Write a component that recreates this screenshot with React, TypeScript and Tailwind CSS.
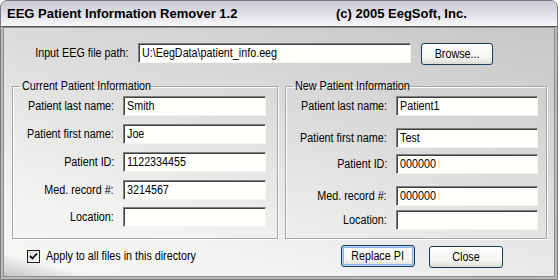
import type { ReactNode } from "react";

const uiFont = "font-['Liberation_Sans',sans-serif]";

type Field = {
  label: string;
  value: string;
  gap: string;
};

const currentFields: Field[] = [
  { label: "Patient last name:", value: "Smith", gap: "mt-[3px]" },
  { label: "Patient first name:", value: "Joe", gap: "mt-[8px]" },
  { label: "Patient ID:", value: "1122334455", gap: "mt-[8px]" },
  { label: "Med. record #:", value: "3214567", gap: "mt-[8px]" },
  { label: "Location:", value: "", gap: "mt-[7px]" },
];

const newFields: Field[] = [
  { label: "Patient last name:", value: "Patient1", gap: "mt-[3px]" },
  { label: "Patient first name:", value: "Test", gap: "mt-[12px]" },
  { label: "Patient ID:", value: "000000", gap: "mt-[6px]" },
  { label: "Med. record #:", value: "000000", gap: "mt-[12px]" },
  { label: "Location:", value: "", gap: "mt-[4px]" },
];

// the dialog font is narrower than Arial, so text is squeezed horizontally
function Narrow({ children, align = "left" }: { children: ReactNode; align?: "left" | "right" | "center" }) {
  const origin = align === "right" ? "origin-right" : align === "center" ? "origin-center" : "origin-left";
  return <span className={`inline-block whitespace-nowrap scale-x-[0.86] ${origin}`}>{children}</span>;
}

function TextBox({ value, width }: { value: string; width: string }) {
  return (
    <div
      className={`${width} h-[20px] shrink-0 overflow-hidden border border-t-[#808080] border-l-[#808080] border-b-[#f4f4f4] border-r-[#f4f4f4] bg-[#fffffc] shadow-[inset_1px_1px_0_#404040] pl-[3px] text-[12.5px] leading-[18px] text-black`}
    >
      <Narrow>{value}</Narrow>
    </div>
  );
}

function Button({ children, width, isDefault }: { children: ReactNode; width: string; isDefault?: boolean }) {
  return (
    <button
      type="button"
      className={`${width} h-[22px] shrink-0 rounded-[3px] border border-[#1b3a5c] bg-[linear-gradient(#ffffff,#f3f3ef_70%,#dcdcd6)] text-[12.5px] leading-[18px] text-black ${
        isDefault ? "shadow-[inset_0_0_0_1px_#b8d4f4,inset_0_0_0_2px_#8ab4ea]" : ""
      }`}
    >
      <Narrow align="center">{children}</Narrow>
    </button>
  );
}

function GroupBox({
  title,
  titleWidth,
  fields,
  width,
  inputWidth,
}: {
  title: string;
  titleWidth: string;
  fields: Field[];
  width: string;
  inputWidth: string;
}) {
  return (
    <fieldset
      className={`${width} h-[160px] border border-[#a4a4a4] shadow-[inset_1px_1px_0_#ffffff,1px_1px_0_#ffffff] px-0`}
    >
      <legend className={`ml-[7px] ${titleWidth} px-[2px] text-[12.5px] leading-[14px] text-black`}>
        <Narrow>{title}</Narrow>
      </legend>
      {fields.map((field) => (
        <div key={field.label} className={`flex items-center ${field.gap}`}>
          <div className="w-[101px] shrink-0 text-right text-[12.5px] leading-[14px] text-black">
            <Narrow align="right">{field.label}</Narrow>
          </div>
          <div className="ml-[9px]">
            <TextBox value={field.value} width={inputWidth} />
          </div>
        </div>
      ))}
    </fieldset>
  );
}

export default function App() {
  return (
    <div className={`w-[560px] h-[280px] bg-white ${uiFont}`}>
      <div className="w-[558px] h-[280px] flex flex-col overflow-hidden rounded-t-[7px] border border-[#7c7c80] bg-[#b9b9be]">
        {/* title bar */}
        <div className="h-[26px] shrink-0 flex items-center pl-[6px] bg-[linear-gradient(#c9c9d4,#dcdce4_45%,#eeeef2_80%,#f8f8f8)] border-b border-[#55555a]">
          <span className="w-[329px] shrink-0 text-[13px] font-bold text-black">EEG Patient Information Remover 1.2</span>
          <span className="text-[13px] font-bold text-black">(c) 2005 EegSoft, Inc.</span>
        </div>

        {/* body */}
        <div className="flex-1 mx-[2px] mb-[2px] flex flex-col border border-[#8c8c8c] bg-[linear-gradient(195deg,#c6c6c6,#dcdcdc_40%,#f3f3f1_78%,#f6f6f4_94%,#c4c4c4)]">
          <div className="mt-[13px] flex items-center">
            <div className="w-[124px] shrink-0 text-right text-[12.5px] leading-[14px] text-black">
              <Narrow align="right">Input EEG file path:</Narrow>
            </div>
            <div className="ml-[10px]">
              <TextBox value="U:\EegData\patient_info.eeg" width="w-[273px]" />
            </div>
            <div className="ml-[10px]">
              <Button width="w-[72px]">Browse...</Button>
            </div>
          </div>

          <div className="mt-[14px] ml-[8px] flex gap-[7px]">
            <GroupBox
              title="Current Patient Information"
              titleWidth="w-[130px]"
              fields={currentFields}
              width="w-[266px]"
              inputWidth="w-[143px]"
            />
            <GroupBox
              title="New Patient Information"
              titleWidth="w-[116px]"
              fields={newFields}
              width="w-[262px]"
              inputWidth="w-[142px]"
            />
          </div>

          <div className="mt-[5px] flex items-center">
            <div className="ml-[23px] w-[13px] h-[13px] shrink-0 border border-[#1e1e1e] bg-[linear-gradient(135deg,#dcdcd6,#ffffff)] flex items-center justify-center">
              <svg width="9" height="9" viewBox="0 0 9 9">
                <path d="M1 4 L3.5 6.5 L8 1.5" fill="none" stroke="#111" strokeWidth="1.8" />
              </svg>
            </div>
            <div className="ml-[6px] w-[295px] shrink-0 text-[12.5px] leading-[14px] text-black">
              <Narrow>Apply to all files in this directory</Narrow>
            </div>
            <Button width="w-[74px]" isDefault>
              Replace PI
            </Button>
            <div className="ml-[14px]">
              <Button width="w-[74px]">Close</Button>
            </div>
          </div>
        </div>
      </div>
    </div>
  );
}
